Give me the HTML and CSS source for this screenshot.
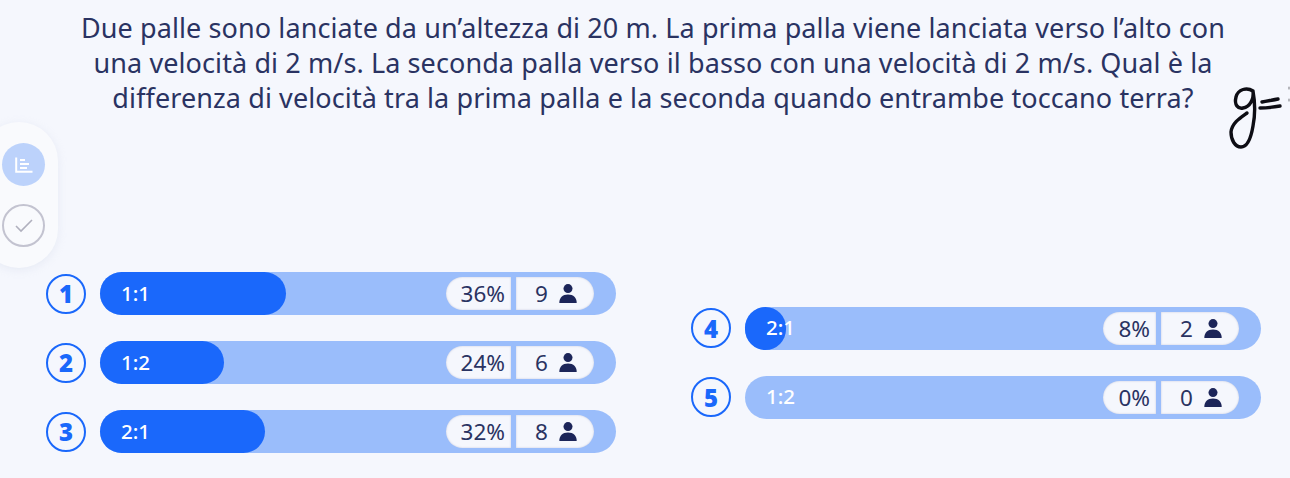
FILE: index.html
```html
<!DOCTYPE html>
<html lang="it">

<head>
    <meta charset="UTF-8">
    <title>Risultati</title>
    <link rel="stylesheet" href="styles.css">
</head>

<body>
    <p class="question">Due palle sono lanciate da un’altezza di 20 m. La prima palla viene lanciata verso l’alto con una velocità di 2 m/s. La seconda palla verso il basso con una velocità di 2 m/s. Qual è la differenza di velocità tra la prima palla e la seconda quando entrambe toccano terra?</p>

    <svg class="ink" width="90" height="90" viewBox="0 0 90 90">
        <path d="M53 21C47 17 38 19 36 27C34 35 38 39 43 38C50 37 54 29 53 21C55 32 55 46 53 56C51 68 47 77 41 77C35 77 31 70 31 62C32 53 40 48 47 43" />
        <path d="M62 32C67 31 73 30 78 29M60 38C66 38 74 37 80 36" />
        <path class="ink-cut" d="M89 17V19M89 29V31" />
    </svg>

    <div class="side">
        <div class="sideBtn sideBtnOn">
            <svg width="18" height="16" viewBox="0 0 18 16">
                <path d="M1.2 0.5V14.8H17.5" />
                <path d="M5 3H10M5 7H14M5 11H12" />
            </svg>
        </div>
        <div class="sideBtn sideBtnOff">
            <svg width="18" height="14" viewBox="0 0 18 14">
                <path d="M1 7L6 12L17 1" />
            </svg>
        </div>
    </div>

    <div class="answers">
        <div class="col">
            <div class="row">
                <span class="num">1</span>
                <div class="bar">
                    <div class="fill" style="width: 36%"></div>
                    <span class="label">1:1</span>
                    <div class="stats"><span class="pct">36%</span><span class="count">9 <svg class="user" viewBox="0 0 18 19"><circle cx="9" cy="4.6" r="4.5" /><path d="M0.3 19C0.3 14 3.5 10.6 9 10.6C14.5 10.6 17.7 14 17.7 19Z" /></svg></span></div>
                </div>
            </div>
            <div class="row">
                <span class="num">2</span>
                <div class="bar">
                    <div class="fill" style="width: 24%"></div>
                    <span class="label">1:2</span>
                    <div class="stats"><span class="pct">24%</span><span class="count">6 <svg class="user" viewBox="0 0 18 19"><circle cx="9" cy="4.6" r="4.5" /><path d="M0.3 19C0.3 14 3.5 10.6 9 10.6C14.5 10.6 17.7 14 17.7 19Z" /></svg></span></div>
                </div>
            </div>
            <div class="row">
                <span class="num">3</span>
                <div class="bar">
                    <div class="fill" style="width: 32%"></div>
                    <span class="label">2:1</span>
                    <div class="stats"><span class="pct">32%</span><span class="count">8 <svg class="user" viewBox="0 0 18 19"><circle cx="9" cy="4.6" r="4.5" /><path d="M0.3 19C0.3 14 3.5 10.6 9 10.6C14.5 10.6 17.7 14 17.7 19Z" /></svg></span></div>
                </div>
            </div>
        </div>

        <div class="col">
            <div class="row">
                <span class="num">4</span>
                <div class="bar">
                    <div class="fill" style="width: 8%"></div>
                    <span class="label">2:1</span>
                    <div class="stats"><span class="pct">8%</span><span class="count">2 <svg class="user" viewBox="0 0 18 19"><circle cx="9" cy="4.6" r="4.5" /><path d="M0.3 19C0.3 14 3.5 10.6 9 10.6C14.5 10.6 17.7 14 17.7 19Z" /></svg></span></div>
                </div>
            </div>
            <div class="row">
                <span class="num">5</span>
                <div class="bar">
                    <span class="label">1:2</span>
                    <div class="stats"><span class="pct">0%</span><span class="count">0 <svg class="user" viewBox="0 0 18 19"><circle cx="9" cy="4.6" r="4.5" /><path d="M0.3 19C0.3 14 3.5 10.6 9 10.6C14.5 10.6 17.7 14 17.7 19Z" /></svg></span></div>
                </div>
            </div>
        </div>
    </div>
</body>

</html>
```

FILE: styles.css
```css
*{
    margin: 0;
    padding: 0;
    box-sizing: border-box;
}

body{
    position: relative;
    width: 1290px;
    height: 478px;
    overflow: hidden;
    background-color: #f5f7fd;
    font-family: "Noto Sans", "Open Sans", sans-serif;
    color: #2a3362;
}

.question{
    width: 1160px;
    margin-left: 73px;
    padding-top: 10px;
    height: 272px;
    font-size: 27px;
    letter-spacing: 0.1px;
    line-height: 35px;
    text-align: center;
}

.ink{
    position: absolute;
    left: 1200px;
    top: 70px;
}

.ink path{
    fill: none;
    stroke: #0d0d14;
    stroke-width: 3.4;
    stroke-linecap: round;
    stroke-linejoin: round;
}

.ink .ink-cut{
    stroke: #8a8a90;
    stroke-width: 1.2;
}

.side{
    position: absolute;
    left: -20px;
    top: 122px;
    width: 78px;
    height: 146px;
    padding: 21px 0 0 22px;
    border-radius: 39px;
    background-color: #f9fafd;
    box-shadow: 0 2px 8px rgba(200, 205, 225, 0.3);
    display: flex;
    flex-direction: column;
    gap: 18px;
}

.sideBtn{
    width: 43px;
    height: 43px;
    border-radius: 50%;
    display: flex;
    justify-content: center;
    align-items: center;
}

.sideBtn svg path{
    fill: none;
}

.sideBtnOn{
    background-color: #bcd2fb;
}

.sideBtnOn svg path{
    stroke: #fff;
    stroke-width: 2;
}

.sideBtnOff{
    border: 2.5px solid #c3c3d0;
}

.sideBtnOff svg path{
    stroke: #b0b0be;
    stroke-width: 1.6;
}

.answers{
    display: grid;
    grid-template-columns: 570px 570px;
    column-gap: 75px;
    margin-left: 46px;
    align-items: center;
}

.col{
    display: flex;
    flex-direction: column;
    gap: 26px;
}

.row{
    display: flex;
    align-items: center;
    gap: 14px;
}

.num{
    flex: none;
    width: 40px;
    height: 40px;
    border: 2px solid #1a68fb;
    border-radius: 50%;
    display: flex;
    justify-content: center;
    align-items: center;
    color: #1a68fb;
    font-size: 24px;
    font-weight: 900;
}

.bar{
    position: relative;
    flex: 1;
    height: 43px;
    padding: 0 22px 0 21px;
    border-radius: 22px;
    background-color: #9abdfb;
    display: flex;
    justify-content: space-between;
    align-items: center;
}

.fill{
    position: absolute;
    left: 0;
    top: 0;
    bottom: 0;
    border-radius: 22px;
    background-color: #1a68fb;
}

.label{
    position: relative;
    top: -1px;
    color: #fff;
    font-size: 20.5px;
    font-weight: 500;
}

.stats{
    position: relative;
    display: flex;
    gap: 5px;
    height: 33px;
    font-size: 22.5px;
}

.pct, .count{
    display: flex;
    align-items: center;
    background-color: #f5f7fd;
    box-shadow: inset 0 0 2px rgba(120, 130, 170, 0.4);
}

.pct{
    padding: 0 6px 0 15px;
    border-radius: 17px 0 0 17px;
}

.count{
    width: 78px;
    padding-left: 19px;
    gap: 11px;
    border-radius: 0 17px 17px 0;
}

.user{
    width: 18px;
    height: 19px;
    fill: #1c2559;
}
```
